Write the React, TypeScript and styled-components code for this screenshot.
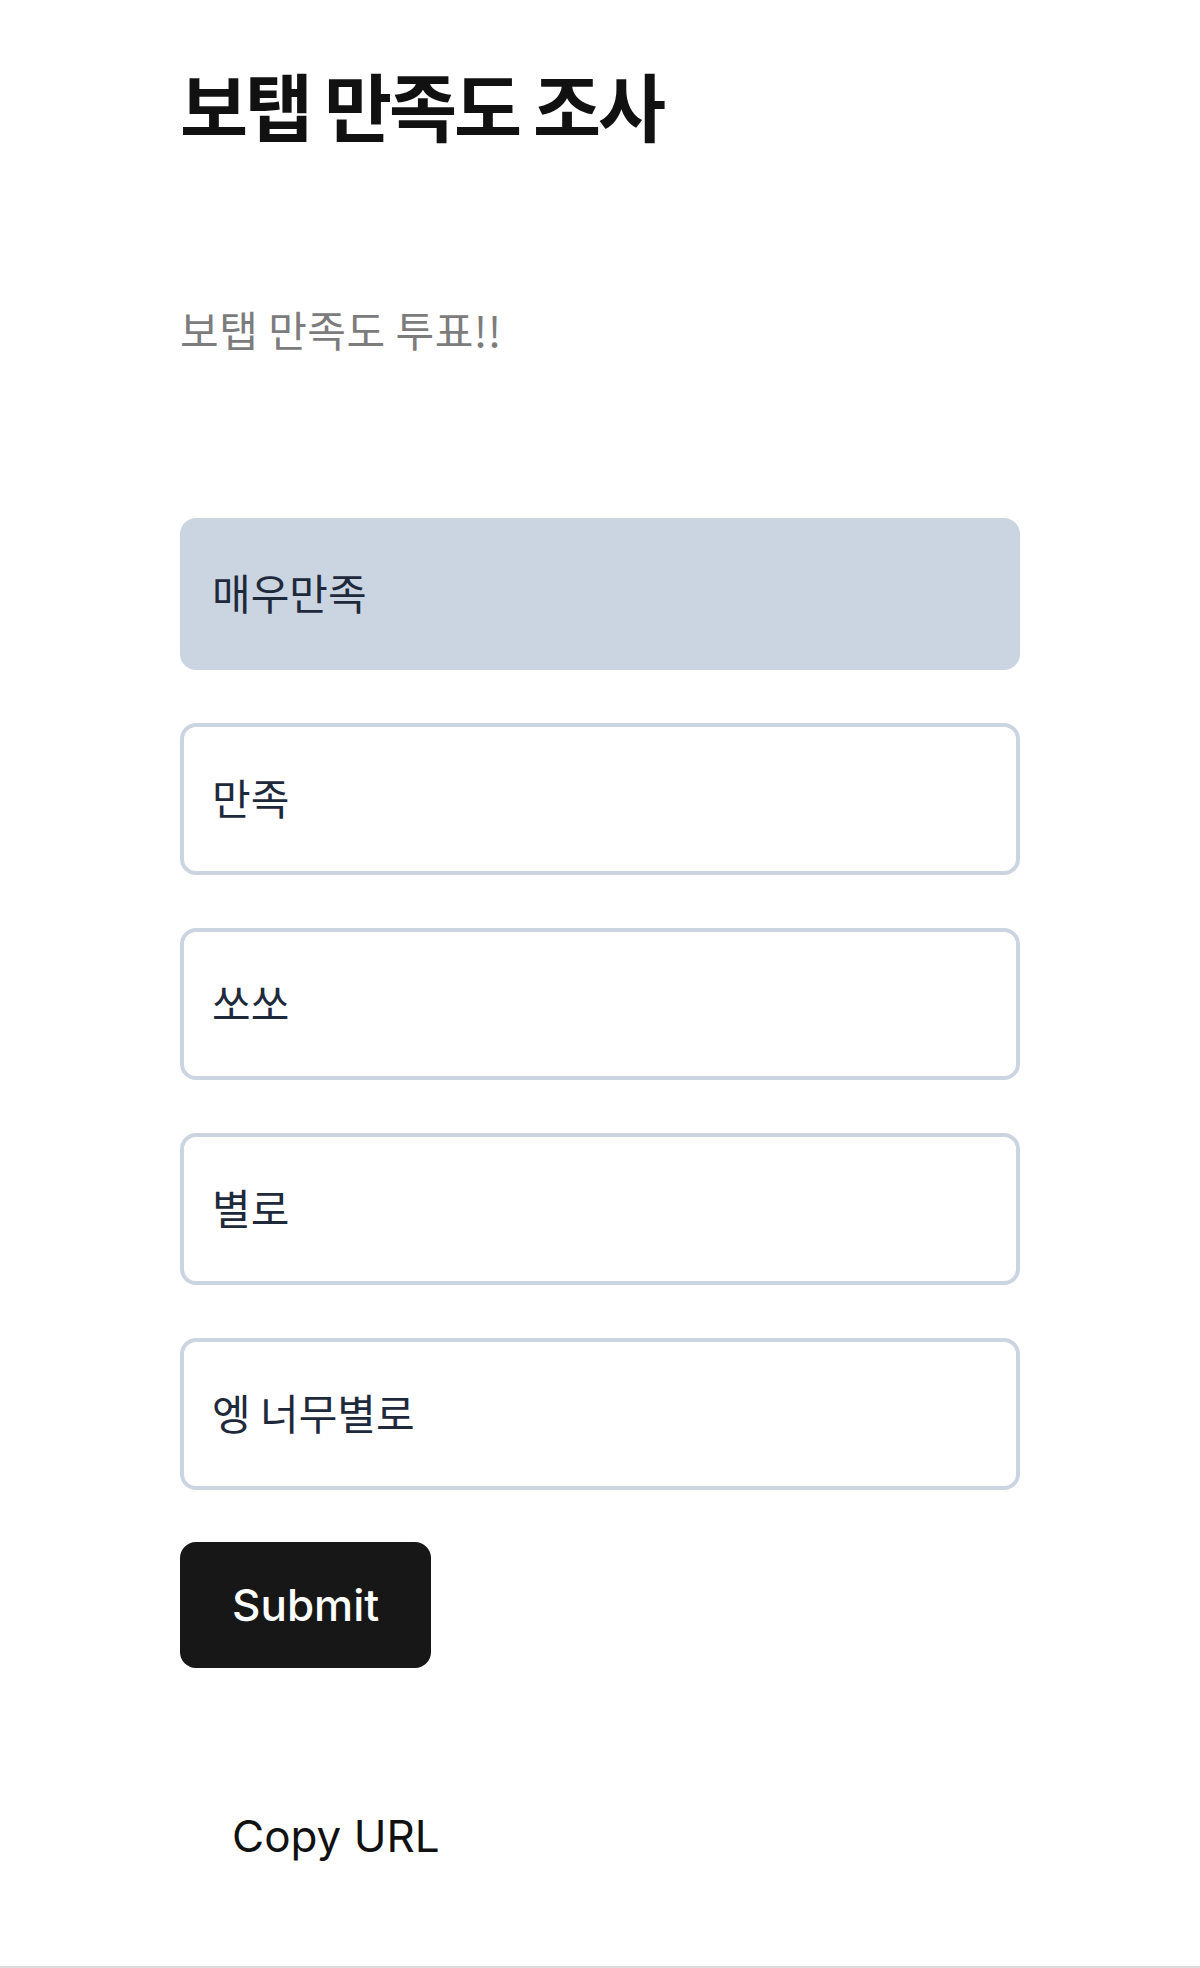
import styled, { createGlobalStyle } from 'styled-components';

const GlobalStyle = createGlobalStyle`
    html, body {
        margin: 0;
        padding: 0;
        background: #ffffff;
    }
    body {
        font-family: 'Noto Sans CJK KR', 'Noto Sans', Inter, sans-serif;
    }
`;

const Page = styled.main`
    box-sizing: border-box;
    height: 1968px;
    padding: 59px 180px 0;
    border-bottom: 2px solid #dcdcdc;
    display: flex;
    flex-direction: column;
    align-items: flex-start;
`;

const Title = styled.h1`
    margin: 0;
    font-size: 74px;
    line-height: 90px;
    font-weight: 700;
    letter-spacing: -3px;
    color: #111111;
`;

const Description = styled.p`
    margin: 156px 0 0;
    font-size: 42px;
    line-height: 47px;
    letter-spacing: 0.5px;
    color: #7c7c7c;
`;

const OptionList = styled.div`
    margin-top: 166px;
    width: 840px;
    display: flex;
    flex-direction: column;
    gap: 53px;
`;

const Option = styled.button<{ $selected?: boolean }>`
    box-sizing: border-box;
    height: 152px;
    width: 100%;
    padding: 0 28px 6px;
    display: flex;
    align-items: center;
    border-radius: 16px;
    border: 4px solid #cbd5e1;
    background: ${(p) => (p.$selected ? '#cbd5e1' : '#ffffff')};
    font-family: 'Noto Sans CJK KR', sans-serif;
    font-size: 42px;
    color: #1e293b;
    text-align: left;
    cursor: pointer;
`;

const ActionButton = styled.button<{ $variant: 'solid' | 'ghost' }>`
    box-sizing: border-box;
    height: 126px;
    padding: 0 52px;
    border: none;
    border-radius: 16px;
    background: ${(p) => (p.$variant === 'solid' ? '#171717' : 'transparent')};
    color: ${(p) => (p.$variant === 'solid' ? '#ffffff' : '#111111')};
    font-family: Inter, 'Noto Sans', sans-serif;
    font-size: 44px;
    font-weight: 500;
    cursor: pointer;
`;

const SubmitButton = styled(ActionButton)`
    margin-top: 52px;
`;

const CopyButton = styled(ActionButton)`
    margin-top: 105px;
    font-weight: 400;
`;

const options = ['매우만족', '만족', '쏘쏘', '별로', '엥 너무별로'];

export default function App() {
    return (
        <>
            <GlobalStyle />
            <Page>
                <Title>보탭 만족도 조사</Title>
                <Description>보탭 만족도 투표!!</Description>
                <OptionList>
                    {options.map((label, i) => (
                        <Option key={label} $selected={i === 0}>
                            {label}
                        </Option>
                    ))}
                </OptionList>
                <SubmitButton $variant="solid">Submit</SubmitButton>
                <CopyButton $variant="ghost">Copy URL</CopyButton>
            </Page>
        </>
    );
}
